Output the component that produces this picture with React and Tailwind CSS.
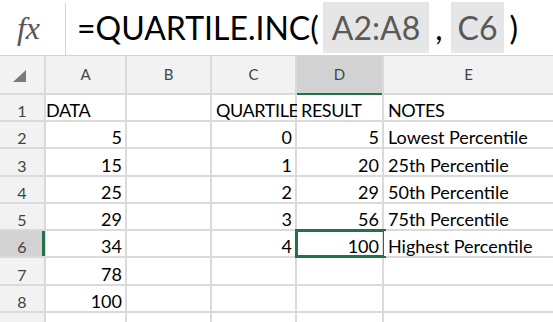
import React from "react";

const rows = [
  ["DATA", "", "QUARTILE", "RESULT", "NOTES"],
  ["5", "", "0", "5", "Lowest Percentile"],
  ["15", "", "1", "20", "25th Percentile"],
  ["25", "", "2", "29", "50th Percentile"],
  ["29", "", "3", "56", "75th Percentile"],
  ["34", "", "4", "100", "Highest Percentile"],
  ["78", "", "", "", ""],
  ["100", "", "", "", ""],
  ["", "", "", "", ""],
];

const font = { fontFamily: "Lato, 'Open Sans', sans-serif" };

function Cell({ text, r, c }) {
  const isNum = text !== "" && !isNaN(Number(text));
  const selected = r === 5 && c === 3;
  const pad = c === 0 && r === 0 ? "pl-0" : "pl-[4px]";
  const track = r === 0 ? "tracking-[-0.4px]" : "";
  return (
    <div
      className={`relative bg-white flex items-end text-[18px] leading-none text-black whitespace-nowrap pb-[1px] ${track} ${
        isNum ? "justify-end pr-[3px]" : `justify-start ${pad}`
      }`}
    >
      {text}
      {selected && (
        <div className="absolute -top-[2px] -left-[2px] -bottom-[2px] -right-[4px] border-[3px] border-[#217346]" />
      )}
    </div>
  );
}

export default function App() {
  const cols = ["A", "B", "C", "D", "E"];
  return (
    <div className="w-[553px] h-[322px] overflow-hidden bg-white" style={font}>
      <div className="h-[56px] flex border-b border-[#d4d4d4]">
        <div className="w-[66px] flex items-start">
          <div className="w-[65px] h-[55px] flex items-center justify-center">
            <span
              className="italic text-[32px] text-[#555555] pr-[8px]"
              style={{ fontFamily: "'Liberation Serif', serif" }}
            >
              fx
            </span>
          </div>
          <div className="w-[1px] h-[52px] mt-[3px] bg-[#d4d4d4]" />
        </div>
        <div className="flex items-center pl-[11px] text-[32px] text-black whitespace-nowrap leading-none">
          <span>=QUARTILE.INC(</span>
          <span className="ml-[4px] bg-[#e6e6e6] text-[#595959] h-[51px] flex items-center px-[9px]">A2:A8</span>
          <span className="ml-[6px]">,</span>
          <span className="ml-[8px] bg-[#e6e6e6] text-[#595959] h-[51px] flex items-center px-[7px]">C6</span>
          <span className="ml-[5px]">)</span>
        </div>
      </div>
      <div className="grid h-[266px] gap-[2px] bg-[#dadada] grid-cols-[44px_79px_83px_83px_85px_1fr] grid-rows-[37px_25px_25px_26px_25px_25px_25px_26px_25px_1fr]">
        <div className="bg-[#f2f2f2] flex items-center justify-center">
          <svg width="14" height="12" viewBox="0 0 14 12" className="ml-[-4px] mt-[2px]">
            <polygon points="13,0 13,12 0,12" fill="#7a7a7a" />
          </svg>
        </div>
        {cols.map((c) => (
          <div
            key={c}
            className={`relative flex items-center justify-center text-[15px] text-[#444444] ${
              c === "D" ? "bg-[#d2d2d2]" : "bg-[#f2f2f2]"
            }`}
          >
            {c}
            {c === "D" && <div className="absolute left-0 right-0 -bottom-[2px] h-[2px] bg-[#217346]" />}
          </div>
        ))}
        {rows.map((row, r) => (
          <React.Fragment key={r}>
            <div
              className={`relative flex items-end justify-center pb-[1px] text-[16px] leading-none text-[#444444] ${
                r === 5 ? "bg-[#d2d2d2]" : "bg-[#f2f2f2]"
              }`}
            >
              {r < 8 ? r + 1 : ""}
              {r === 5 && <div className="absolute top-0 bottom-0 -right-[1px] w-[3px] bg-[#217346]" />}
            </div>
            {row.map((t, c) => (
              <Cell key={c} text={t} r={r} c={c} />
            ))}
          </React.Fragment>
        ))}
      </div>
    </div>
  );
}
